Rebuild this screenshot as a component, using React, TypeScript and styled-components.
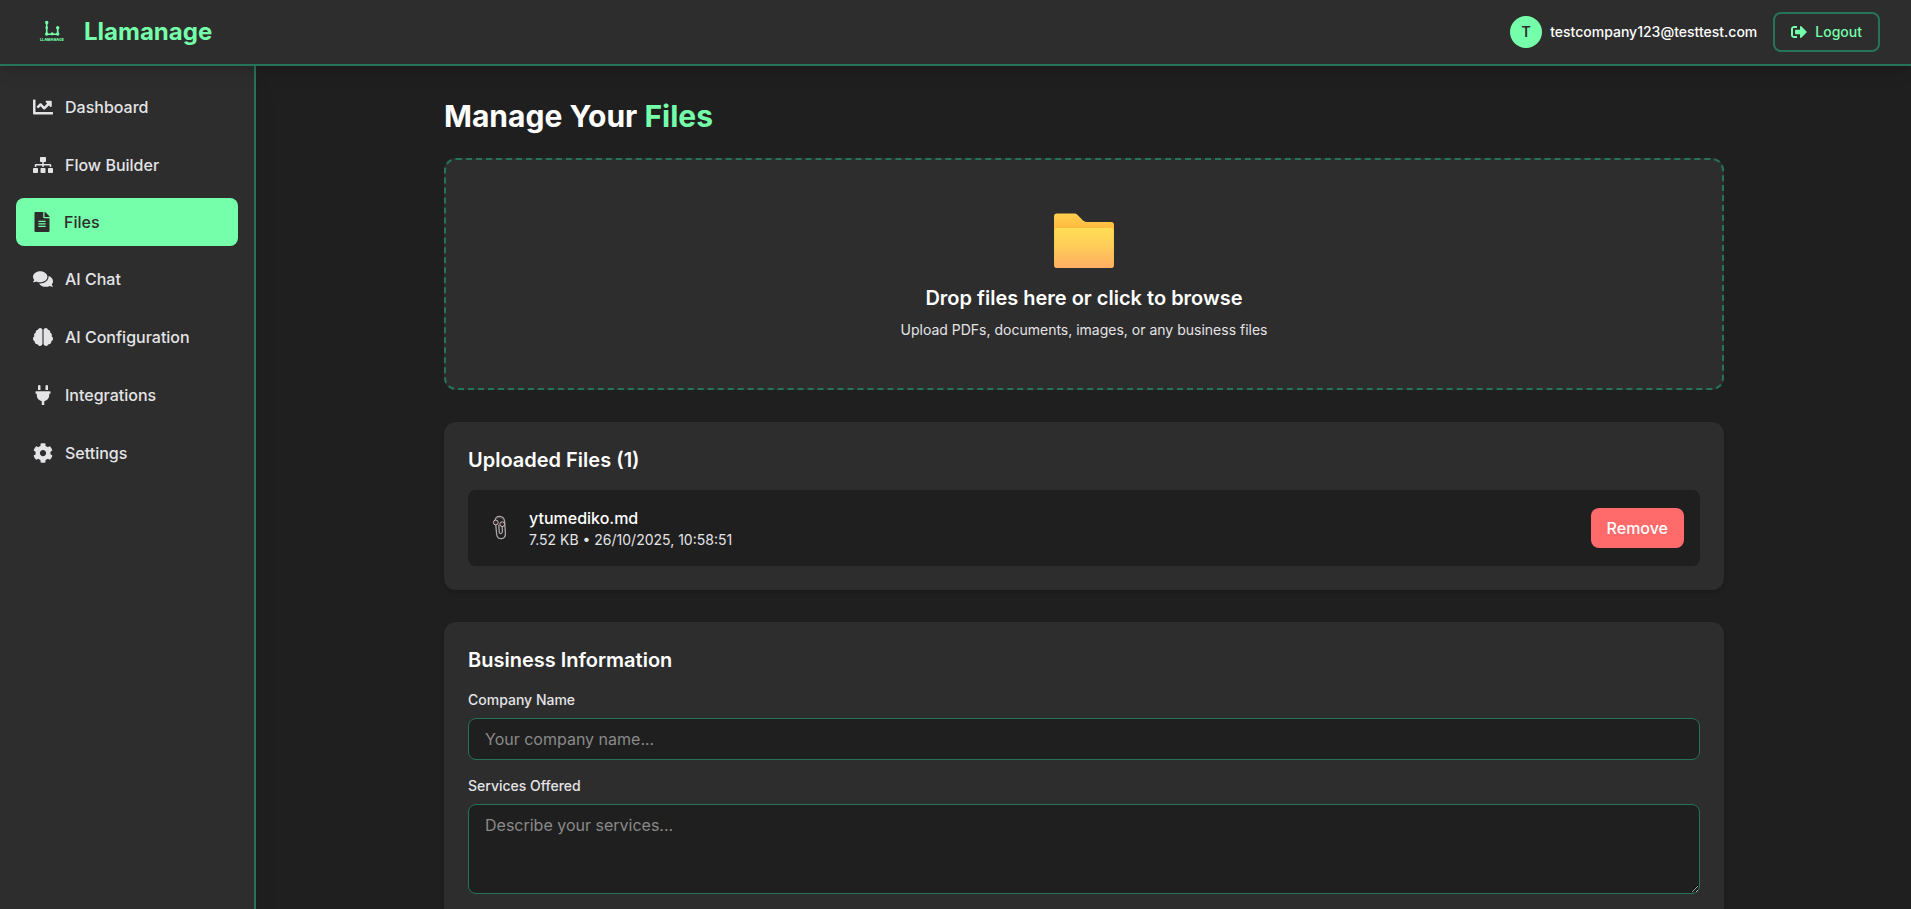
import React from "react";
import styled, { createGlobalStyle } from "styled-components";
import {
  FaBrain,
  FaChartLine,
  FaCog,
  FaComments,
  FaFileAlt,
  FaPlug,
  FaSignOutAlt,
  FaSitemap,
} from "react-icons/fa";

const color = {
  page: "#1f1f1f",
  panel: "#2d2d2d",
  mint: "#76ffaa",
  teal: "#26735b",
  text: "#ffffff",
  soft: "#e4e4e7",
  danger: "#ff6b6b",
};

const GlobalStyle = createGlobalStyle`
  *, *::before, *::after { box-sizing: border-box; }
  body {
    margin: 0;
    background: ${color.page};
    color: ${color.text};
    font-family: Inter, "Liberation Sans", sans-serif;
    font-size: 16px;
    line-height: 24px;
  }
  h1, h2, h3, p { margin: 0; }
  button, input, textarea { font: inherit; }
`;

const Shell = styled.div`
  display: flex;
  flex-direction: column;
  height: 100vh;
  overflow: hidden;
`;

const Header = styled.header`
  position: relative;
  z-index: 2;
  flex: none;
  display: flex;
  align-items: center;
  justify-content: space-between;
  height: 66px;
  padding: 0 31px 0 32px;
  background: ${color.panel};
  border-bottom: 2px solid ${color.teal};
  box-shadow: 0 10px 15px -3px rgba(0, 0, 0, 0.1), 0 4px 6px -4px rgba(0, 0, 0, 0.1);
`;

const Brand = styled.div`
  display: flex;
  align-items: center;
  gap: 12px;
  color: ${color.mint};
  font-size: 24px;
  font-weight: 700;
  line-height: 32px;
`;

const Account = styled.div`
  display: flex;
  align-items: center;
  font-size: 14px;
  line-height: 20px;
`;

const Avatar = styled.span`
  display: grid;
  place-items: center;
  width: 32px;
  height: 32px;
  margin-right: 8px;
  border-radius: 50%;
  background: ${color.mint};
  color: ${color.panel};
  font-weight: 600;
`;

const Email = styled.span`
  margin-right: 16px;
  font-weight: 500;
`;

const LogoutButton = styled.button`
  display: flex;
  align-items: center;
  gap: 8px;
  height: 40px;
  padding: 0 16px;
  border: 2px solid ${color.teal};
  border-radius: 8px;
  background: transparent;
  color: ${color.mint};
  font-weight: 500;
`;

const Body = styled.div`
  flex: 1;
  display: flex;
  min-height: 0;
`;

const Sidebar = styled.nav`
  position: relative;
  z-index: 1;
  flex: none;
  display: flex;
  flex-direction: column;
  gap: 8px;
  width: 256px;
  padding: 16px;
  background: ${color.panel};
  border-right: 2px solid ${color.teal};
  box-shadow: 0 20px 25px -5px rgba(0, 0, 0, 0.1), 0 8px 10px -6px rgba(0, 0, 0, 0.1);
`;

const NavItem = styled.a<{ $active?: boolean }>`
  display: flex;
  align-items: center;
  gap: 12px;
  padding: 12px 16px;
  border: ${(p) => (p.$active ? "0" : "1px solid transparent")};
  border-radius: 8px;
  background: ${(p) => (p.$active ? color.mint : "transparent")};
  color: ${(p) => (p.$active ? color.panel : color.soft)};
  font-weight: 500;

  svg {
    flex: none;
    width: 20px;
    height: 20px;
  }
`;

const Main = styled.main`
  flex: 1;
  min-width: 0;
  padding: 32px 32px 32px 33px;
  overflow: hidden;
`;

const Content = styled.div`
  display: flex;
  flex-direction: column;
  gap: 32px;
  max-width: 1280px;
  margin: 0 auto;
`;

const PageTitle = styled.h1`
  margin-bottom: -8px;
  font-size: 30px;
  font-weight: 700;
  line-height: 36px;

  span { color: ${color.mint}; }
`;

const DropZone = styled.section`
  display: flex;
  flex-direction: column;
  align-items: center;
  padding: 48px;
  border: 2px dashed ${color.teal};
  border-radius: 12px;
  background: ${color.panel};

  svg { margin-bottom: 16px; }
`;

const DropTitle = styled.h3`
  margin-bottom: 8px;
  font-size: 20px;
  font-weight: 600;
  line-height: 28px;
`;

const DropHint = styled.p`
  color: ${color.soft};
  font-size: 14px;
  line-height: 20px;
`;

const Card = styled.section`
  display: flex;
  flex-direction: column;
  gap: 16px;
  padding: 24px;
  border-radius: 12px;
  background: ${color.panel};
  box-shadow: 0 4px 6px -1px rgba(0, 0, 0, 0.1), 0 2px 4px -2px rgba(0, 0, 0, 0.1);
`;

const CardTitle = styled.h2`
  font-size: 20px;
  font-weight: 600;
  line-height: 28px;
`;

const FileRow = styled.div`
  display: flex;
  align-items: center;
  gap: 12px;
  padding: 16px;
  border-radius: 8px;
  background: ${color.page};
`;

const FileInfo = styled.div`
  flex: 1;
`;

const FileName = styled.p`
  font-weight: 500;
`;

const FileMeta = styled.p`
  color: ${color.soft};
  font-size: 14px;
  line-height: 20px;
`;

const RemoveButton = styled.button`
  height: 40px;
  padding: 0 16px;
  border: 0;
  border-radius: 8px;
  background: ${color.danger};
  color: ${color.text};
  font-weight: 500;
`;

const Field = styled.label`
  display: flex;
  flex-direction: column;
  gap: 8px;
  color: ${color.soft};
  font-size: 14px;
  font-weight: 500;
  line-height: 20px;
`;

const TextInput = styled.input`
  display: block;
  width: 100%;
  height: 42px;
  padding: 8px 16px;
  border: 1px solid ${color.teal};
  border-radius: 8px;
  background: ${color.page};
  color: ${color.text};
  font-size: 16px;
  font-weight: 400;
  line-height: 24px;

  &::placeholder { color: #8a8a8a; }
`;

const TextArea = styled(TextInput).attrs({ as: "textarea" })`
  height: 90px;
  resize: vertical;
`;

function LlamaMark() {
  return (
    <svg width="40" height="40" viewBox="0 0 40 40" fill="none">
      <path d="M14.700 10.500V22.200H25.700V15.800" stroke={color.mint} strokeWidth="1.6" />
      <g fill={color.mint}>
        <circle cx="14.7" cy="10.5" r="1.7" />
        <circle cx="14.7" cy="15.7" r="1.300" />
        <circle cx="25.7" cy="15.8" r="1.7" />
        <circle cx="14.7" cy="22" r="1.7" />
        <circle cx="20.2" cy="21.8" r="1.5" />
        <circle cx="25.7" cy="22" r="1.7" />
      </g>
      <text
        x="8"
        y="28.9"
        fill={color.mint}
        fontFamily="Inter, sans-serif"
        fontSize="4"
        fontWeight="800"
        textLength="24"
        lengthAdjust="spacingAndGlyphs"
      >
        LLAMANAGE
      </text>
    </svg>
  );
}

function FolderPicture() {
  return (
    <svg width="60" height="60" viewBox="0 0 60 60">
      <defs>
        <linearGradient id="folderBack" x1="0" y1="0" x2="0" y2="1">
          <stop offset="0" stopColor="#ffcf4f" />
          <stop offset="0.33" stopColor="#ffb63a" />
          <stop offset="1" stopColor="#f5a83a" />
        </linearGradient>
        <linearGradient id="folderFront" x1="0" y1="0" x2="0" y2="1">
          <stop offset="0" stopColor="#ffdf54" />
          <stop offset="0.5" stopColor="#ffca5a" />
          <stop offset="1" stopColor="#ffae62" />
        </linearGradient>
      </defs>
      <path
        d="M0 8.5a3 3 0 0 1 3-3H20.4a4 4 0 0 1 2.7 1.1L29 12.4a5 5 0 0 0 3.5 1.5H57a3 3 0 0 1 3 3V57a3 3 0 0 1-3 3H3a3 3 0 0 1-3-3Z"
        fill="url(#folderBack)"
      />
      <rect x="0.3" y="20" width="59.4" height="40" rx="3" fill="url(#folderFront)" />
    </svg>
  );
}

function PaperclipPicture() {
  return (
    <svg width="33" height="32" viewBox="0 0 33 32" fill="none">
      <path
        d="M11 9c.3-3 2-4.700 4.600-4.700 2.800.1 4.600 1.800 5 5l.8 11.700c.3 3.500-1.300 5.600-4 5.700-2.700.1-4.500-1.700-4.800-5L11.800 13.500M14.800 13.500l.4 6c.1 1.500.8 2.200 1.800 2.100 1-.1 1.500-.9 1.400-2.200L18.100 14"
        stroke="#aaa6a9"
        strokeWidth="1.3"
        strokeLinecap="round"
      />
      <path d="M12.500 6.800c1.200-1.500 4-1.800 6.500.2" stroke="#5d4a4c" strokeWidth="1.2" />
      <circle cx="11.800" cy="10.500" r="2.400" fill="#3a2226" stroke="#c9bfc0" />
      <circle cx="18.200" cy="12.200" r="2.400" fill="#3a2226" stroke="#c9bfc0" />
    </svg>
  );
}

const navItems = [
  { label: "Dashboard", Icon: FaChartLine },
  { label: "Flow Builder", Icon: FaSitemap },
  { label: "Files", Icon: FaFileAlt, active: true },
  { label: "AI Chat", Icon: FaComments },
  { label: "AI Configuration", Icon: FaBrain },
  { label: "Integrations", Icon: FaPlug },
  { label: "Settings", Icon: FaCog },
];

export default function App() {
  return (
    <Shell>
      <GlobalStyle />
      <Header>
        <Brand>
          <LlamaMark />
          Llamanage
        </Brand>
        <Account>
          <Avatar>T</Avatar>
          <Email>testcompany123@testtest.com</Email>
          <LogoutButton>
            <FaSignOutAlt size={16} />
            Logout
          </LogoutButton>
        </Account>
      </Header>
      <Body>
        <Sidebar>
          {navItems.map(({ label, Icon, active }) => (
            <NavItem key={label} $active={active}>
              <Icon />
              {label}
            </NavItem>
          ))}
        </Sidebar>
        <Main>
          <Content>
            <PageTitle>
              Manage Your <span>Files</span>
            </PageTitle>
            <DropZone>
              <FolderPicture />
              <DropTitle>Drop files here or click to browse</DropTitle>
              <DropHint>Upload PDFs, documents, images, or any business files</DropHint>
            </DropZone>
            <Card>
              <CardTitle>Uploaded Files (1)</CardTitle>
              <FileRow>
                <PaperclipPicture />
                <FileInfo>
                  <FileName>ytumediko.md</FileName>
                  <FileMeta>7.52 KB • 26/10/2025, 10:58:51</FileMeta>
                </FileInfo>
                <RemoveButton>Remove</RemoveButton>
              </FileRow>
            </Card>
            <Card>
              <CardTitle>Business Information</CardTitle>
              <Field>
                Company Name
                <TextInput placeholder="Your company name..." />
              </Field>
              <Field>
                Services Offered
                <TextArea placeholder="Describe your services..." />
              </Field>
            </Card>
          </Content>
        </Main>
      </Body>
    </Shell>
  );
}
